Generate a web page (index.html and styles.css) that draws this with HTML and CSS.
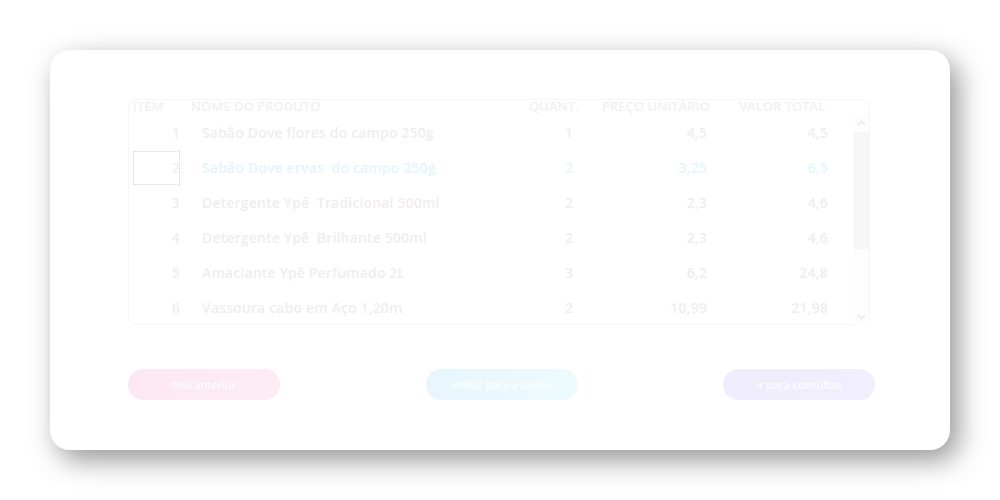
FILE: index.html
```html
<!DOCTYPE html>
<html lang="pt-BR">
<head>
<meta charset="utf-8">
<title>Itens</title>
<link rel="stylesheet" href="styles.css">
</head>
<body>
<div class="card">
  <div class="table">
    <div class="thead">
      <span>ITEM</span>
      <span>NOME DO PRODUTO</span>
      <span>QUANT.</span>
      <span>PREÇO UNITÁRIO</span>
      <span>VALOR TOTAL</span>
    </div>
    <div class="body">
      <div class="rows">
        <div class="row"><span class="num">1</span><span class="name">Sabão Dove flores do campo 250g</span><span class="qt">1</span><span class="pr">4,5</span><span class="tot">4,5</span></div>
        <div class="row sel"><span class="num focus">2</span><span class="name">Sabão Dove ervas&nbsp; do campo 250g</span><span class="qt">2</span><span class="pr">3,25</span><span class="tot">6,5</span></div>
        <div class="row"><span class="num">3</span><span class="name">Detergente Ypê&nbsp; Tradicional 500ml</span><span class="qt">2</span><span class="pr">2,3</span><span class="tot">4,6</span></div>
        <div class="row"><span class="num">4</span><span class="name">Detergente Ypê&nbsp; Brilhante 500ml</span><span class="qt">2</span><span class="pr">2,3</span><span class="tot">4,6</span></div>
        <div class="row"><span class="num">5</span><span class="name">Amaciante Ypê Perfumado 2L</span><span class="qt">3</span><span class="pr">6,2</span><span class="tot">24,8</span></div>
        <div class="row"><span class="num">6</span><span class="name">Vassoura cabo em Aço 1,20m</span><span class="qt">2</span><span class="pr">10,99</span><span class="tot">21,98</span></div>
      </div>
      <div class="scrollbar">
        <svg class="arrow" width="15" height="17" viewBox="0 0 15 17"><path d="M4 10 L7.5 6.5 L11 10" fill="none" stroke="#e8e8e8" stroke-width="1.5"/></svg>
        <div class="thumb"></div>
        <div class="track"></div>
        <svg class="arrow" width="15" height="17" viewBox="0 0 15 17"><path d="M4 7 L7.5 10.5 L11 7" fill="none" stroke="#e8e8e8" stroke-width="1.5"/></svg>
      </div>
    </div>
  </div>
  <div class="buttons">
    <button class="btn pink">tela anterior</button>
    <button class="btn cyan">voltar para o menu</button>
    <button class="btn lilac">ir para consultas</button>
  </div>
</div>
</body>
</html>
```
FILE: styles.css
```css
* { box-sizing: border-box; }
html, body { margin: 0; background: #fff; }
body { padding: 50px; font-family: "Open Sans", "Liberation Sans", sans-serif; }

.card {
  width: 900px;
  height: 400px;
  background: #fff;
  border-radius: 20px;
  box-shadow: 8px 10px 28px rgba(0, 0, 0, 0.42);
  padding: 49px 75px 0 78px;
}

.table {
  width: 742px;
  height: 226px;
  border: 1px solid #f7f5f5;
  border-radius: 8px;
  display: flex;
  flex-direction: column;
}

.thead {
  display: grid;
  grid-template-columns: 58px 338px 73px 137px 1fr;
  padding-left: 4px;
  height: 15px;
  font-size: 13px;
  font-weight: 600;
  line-height: 15px;
  color: #f3f0f0;
  margin-top: -1px;
}

.body {
  display: flex;
  flex: 1;
}

.rows {
  width: 726px;
  padding-top: 1px;
}

.row {
  display: grid;
  grid-template-columns: 47px 360px 58px 109px 121px;
  padding-left: 4px;
  height: 35px;
  align-items: center;
  font-size: 14px;
  font-weight: 600;
  letter-spacing: 0.16px;
  color: #f0eded;
}
.row.sel { color: #e3f5fd; }

.num { text-align: right; height: 34px; line-height: 34px; }
.focus { outline: 1px dotted #d6d6d6; outline-offset: -1px; }
.name { padding-left: 22px; white-space: nowrap; }
.qt { text-align: center; }
.pr, .tot { text-align: right; }

.scrollbar {
  width: 15px;
  display: flex;
  flex-direction: column;
  background: #fefdfd;
  margin-top: 1px;
  border-radius: 0 0 7px 0;
}
.arrow { display: block; flex: none; }
.thumb { height: 117px; background: #f7f6f6; flex: none; }
.track { flex: 1; }

.buttons {
  display: flex;
  justify-content: space-between;
  width: 747px;
  margin-top: 44px;
}

.btn {
  width: 152px;
  height: 31px;
  border: none;
  border-radius: 16px;
  color: #fff;
  font-family: "Lato", "Liberation Sans", sans-serif;
  font-size: 12px;
  padding: 0;
}
.pink { background: linear-gradient(100deg, #fbe8f2, #fdebf6); }
.cyan { background: linear-gradient(100deg, #e7f6fd, #edfbfe); }
.lilac { background: linear-gradient(100deg, #efecfd, #f1eefd); }
```
